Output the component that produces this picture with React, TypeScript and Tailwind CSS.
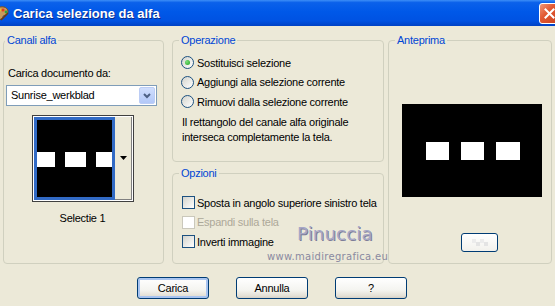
import type { ReactNode } from "react";

const TitleBar = () => (
  <div className="h-[26px] flex items-center overflow-hidden bg-[linear-gradient(to_bottom,#3D8EF7_0%,#0B61EA_10%,#0058E8_45%,#0052E2_80%,#0042C4_100%)]">
    <svg width="9" height="16" viewBox="8 0 9 16" className="shrink-0">
      <path d="M2 9 C2 4 7 1 12 2 C16 3 17 7 15 9 C13 11 11 10 11 12 C11 14 8 15 5 14 C3 13 2 11 2 9 Z" fill="#C99A5B" stroke="#7A4B1C" strokeWidth="1" />
      <circle cx="11" cy="5" r="1.6" fill="#E23B1E" />
      <circle cx="14" cy="7" r="1.4" fill="#2FA33A" />
      <circle cx="8" cy="5" r="1.4" fill="#F2C21A" />
      <circle cx="12" cy="12" r="1.3" fill="#1E5BD8" />
      <path d="M9 15 L16 8" stroke="#6B3A12" strokeWidth="1.6" />
    </svg>
    <span className="ml-[4px] pt-px text-[13px] font-bold tracking-normal text-white [text-shadow:1px_1px_0_#0A2D8C]">
      Carica selezione da alfa
    </span>
    <div className="ml-auto mr-[-5px] w-[21px] h-[21px] rounded-[3px] border border-white flex items-center justify-center bg-[linear-gradient(135deg,#F0977A_0%,#E25A34_40%,#C9401C_100%)]">
      <svg width="11" height="11" viewBox="0 0 11 11">
        <path d="M1.5 1.5 L9.5 9.5 M9.5 1.5 L1.5 9.5" stroke="white" strokeWidth="2" strokeLinecap="square" />
      </svg>
    </div>
  </div>
);

const Group = ({
  title,
  className,
  legendClass,
  children,
}: {
  title: string;
  className: string;
  legendClass: string;
  children: ReactNode;
}) => (
  <fieldset className={`border border-[#D0D0BF] rounded-[4px] ${className}`}>
    <legend className={`px-[2px] leading-[13px] text-[#0046D5] ${legendClass}`}>{title}</legend>
    {children}
  </fieldset>
);

const Radio = ({ checked, label }: { checked?: boolean; label: string }) => (
  <div className="flex items-center gap-[3px] h-[19.5px]">
    <span className="w-[13px] h-[13px] rounded-full border border-[#1C5180] flex items-center justify-center bg-[linear-gradient(135deg,#D4D4CC,#FFFFFF)]">
      {checked && (
        <span className="w-[5px] h-[5px] rounded-full bg-[radial-gradient(circle_at_35%_35%,#7BE07A,#21A121)]" />
      )}
    </span>
    <span>{label}</span>
  </div>
);

const Check = ({ label, disabled }: { label: string; disabled?: boolean }) => (
  <div className="flex items-center gap-[2px] h-[19.5px]">
    <span
      className={
        disabled
          ? "w-[13px] h-[13px] border border-[#CAC8BB] bg-white"
          : "w-[13px] h-[13px] border border-[#1C5180] bg-[linear-gradient(135deg,#D4D4CC,#FFFFFF)]"
      }
    />
    <span className={disabled ? "text-[#ACA899]" : ""}>{label}</span>
  </div>
);

const Button = ({ label, isDefault }: { label: string; isDefault?: boolean }) => (
  <div
    className={`w-[72px] h-[22px] rounded-[3px] border border-[#003C74] flex items-center justify-center bg-[linear-gradient(to_bottom,#FFFFFF_0%,#F4F4F0_60%,#E3DFD5_90%,#D6D0C5_100%)] ${
      isDefault ? "shadow-[inset_0_0_0_2px_#A8C4F0]" : ""
    }`}
  >
    {label}
  </div>
);

const Thumb = () => (
  <svg width="75" height="77" viewBox="0 0 75 77" className="block">
    <rect width="75" height="77" fill="black" />
    <rect x="0" y="32" width="18" height="15" fill="white" />
    <rect x="28" y="32" width="21" height="15" fill="white" />
    <rect x="59" y="32" width="16" height="15" fill="white" />
  </svg>
);

const Preview = () => (
  <svg width="140" height="93" viewBox="0 0 140 93" className="block">
    <rect width="140" height="93" fill="black" />
    <rect x="24" y="38" width="23" height="18" fill="white" />
    <rect x="59" y="38" width="23" height="18" fill="white" />
    <rect x="94" y="38" width="24" height="18" fill="white" />
  </svg>
);

const App = () => {
  return (
    <div className="relative w-[555px] h-[306px] overflow-hidden bg-[#ECE9D8] font-['Liberation_Sans',Arial,sans-serif] text-[11px] tracking-[-0.25px] text-black">
      <TitleBar />

      <div className="flex pl-[3px] pt-[8px]">
        <Group title="Canali alfa" className="w-[161px] h-[230px]" legendClass="ml-px">
          <div className="flex flex-col">
            <div className="ml-[4px] mt-[20px] leading-[13px]">Carica documento da:</div>
            <div className="ml-[2px] mt-[5px] w-[151px] h-[21px] border border-[#7F9DB9] bg-white flex items-center">
              <span className="pl-[4px] flex-1">Sunrise_werkblad</span>
              <span className="w-[16px] h-[17px] mr-px rounded-[2px] border border-[#BCCDF5] flex items-center justify-center bg-[linear-gradient(to_bottom,#D0DEFD,#B2C8F8)]">
                <svg width="8" height="6" viewBox="0 0 8 6">
                  <path d="M1 1 L4 4 L7 1" stroke="#4D6185" strokeWidth="2" fill="none" />
                </svg>
              </span>
            </div>
            <div className="ml-[28px] mt-[9px] w-[102px] h-[87px] border border-[#404040] bg-white p-px flex">
              <div className="border-[3px] border-[#316AC5]">
                <Thumb />
              </div>
              <div className="flex-1 bg-[#ECE9D8] border-r border-b border-[#808080] flex items-center justify-center">
                <svg width="7" height="4" viewBox="0 0 7 4">
                  <path d="M0 0 L7 0 L3.5 4 Z" fill="black" />
                </svg>
              </div>
            </div>
            <div className="mt-[10px] text-center leading-[13px] pr-[2px]">Selectie 1</div>
          </div>
        </Group>

        <div className="ml-[8px] w-[212px] flex flex-col gap-[5px]">
          <Group title="Operazione" className="h-[128px]" legendClass="ml-[6px]">
            <div className="pl-[8px] pt-[6px]">
              <Radio checked label="Sostituisci selezione" />
              <Radio label="Aggiungi alla selezione corrente" />
              <Radio label="Rimuovi dalla selezione corrente" />
              <p className="mt-[3px] pl-px leading-[15px]">
                Il rettangolo del canale alfa originale
                <br />
                interseca completamente la tela.
              </p>
            </div>
          </Group>
          <Group title="Opzioni" className="h-[97px]" legendClass="ml-[6px]">
            <div className="pl-[9px] pt-[13px]">
              <Check label="Sposta in angolo superiore sinistro tela" />
              <Check disabled label="Espandi sulla tela" />
              <Check label="Inverti immagine" />
            </div>
          </Group>
        </div>

        <Group title="Anteprima" className="ml-[4px] w-[164px] h-[230px]" legendClass="ml-[6px]">
          <div className="flex flex-col">
            <div className="ml-[13px] mt-[57px]">
              <Preview />
            </div>
            <div className="ml-[72px] mt-[36px] w-[37px] h-[19px] rounded-[3px] border border-[#003C74] bg-[linear-gradient(to_bottom,#FFFFFF,#F2F1EC)] flex items-center justify-center">
              <svg width="20" height="9" viewBox="0 0 20 9">
                <rect x="2" y="1" width="4" height="4" fill="#ECECEC" />
                <rect x="10" y="1" width="4" height="4" fill="#ECECEC" />
                <rect x="6" y="4" width="4" height="4" fill="#E4E4E4" />
                <rect x="14" y="4" width="4" height="4" fill="#E4E4E4" />
              </svg>
            </div>
          </div>
        </Group>
      </div>

      <div className="flex pl-[137px] gap-[27px] mt-[13px]">
        <Button isDefault label="Carica" />
        <Button label="Annulla" />
        <Button label="?" />
      </div>

      <div className="absolute left-[297px] top-[224px] pointer-events-none">
        <span className="font-['DejaVu_Sans',sans-serif] text-[18px] leading-[20px] tracking-[0.2px] text-[#A7A7C6] [text-shadow:1px_1px_0_#7C7C98]">
          Pinuccia
        </span>
      </div>
      <div className="absolute left-[267px] top-[248px] pointer-events-none">
        <span className="font-['DejaVu_Sans',sans-serif] text-[10px] leading-[12px] tracking-[0.3px] text-[#8A8AA0]">
          www.maidiregrafica.eu
        </span>
      </div>
    </div>
  );
};

export default App;
